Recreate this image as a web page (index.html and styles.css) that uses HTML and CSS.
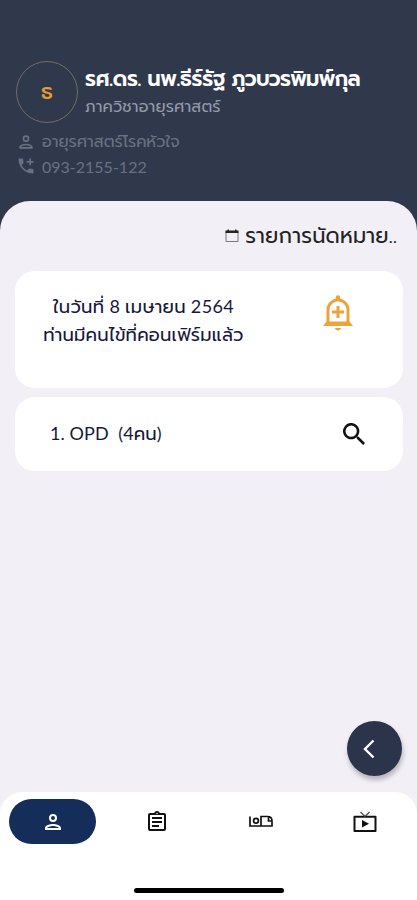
FILE: index.html
```html
<!DOCTYPE html>
<html lang="th">
<head>
    <meta charset="UTF-8">
    <meta name="viewport" content="width=device-width, initial-scale=1.0">
    <title>รายการนัดหมาย</title>
    <link rel="stylesheet" href="styles.css">
</head>
<body>
    <div class="app">
        <header class="header">
            <div class="profile">
                <div class="avatar">ธ</div>
                <div class="profile-text">
                    <h1><span class="name-title">รศ.ดร. นพ.ธีร์รัฐ</span> <span class="name-last">ภูวบวรพิมพ์กุล</span></h1>
                    <p class="department">ภาควิชาอายุรศาสตร์</p>
                </div>
            </div>
            <div class="info">
                <svg viewBox="0 0 24 24"><path d="M12 6a2 2 0 1 1 0 4 2 2 0 0 1 0-4m0 10c2.700 0 5.800 1.290 6 2H6c.230-.720 3.310-2 6-2m0-12a4 4 0 1 0 0 8 4 4 0 0 0 0-8m0 10c-2.670 0-8 1.340-8 4v2h16v-2c0-2.660-5.330-4-8-4"/></svg>
                <span class="specialty">อายุรศาสตร์โรคหัวใจ</span>
            </div>
            <div class="info">
                <svg viewBox="0 0 24 24"><path d="M20 15.500c-1.250 0-2.450-.2-3.570-.570-.350-.110-.740-.030-1.020.240l-2.200 2.200c-2.830-1.440-5.150-3.750-6.590-6.580l2.200-2.210c.280-.270.360-.660.250-1.010A11.400 11.400 0 0 1 8.500 4c0-.550-.450-1-1-1H4c-.550 0-1 .450-1 1 0 9.390 7.610 17 17 17 .550 0 1-.450 1-1v-3.500c0-.550-.450-1-1-1M21 6h-3V3h-2v3h-3v2h3v3h2V8h3z"/></svg>
                <span class="phone">093-2155-122</span>
            </div>
        </header>

        <main class="sheet">
            <div class="sheet-title">
                <svg viewBox="0 0 14 14"><path d="M1 2.500h12v10H1z" fill="none" stroke="#777" stroke-width="1"/><path d="M.5 1.500h13V4H.5zM2.500.5H4v2H2.500zM10 .5h1.500v2H10z"/></svg>
                <h2>รายการนัดหมาย..</h2>
            </div>

            <section class="card notice">
                <div class="notice-text">
                    <p class="notice-date">ในวันที่ 8 เมษายน 2564</p>
                    <p class="notice-message">ท่านมีคนไข้ที่คอนเฟิร์มแล้ว</p>
                </div>
                <svg class="bell" viewBox="0 0 30 36"><path d="M5 28V15a10 10 0 0 1 20 0v13" fill="none" stroke="#eda33b" stroke-width="3"/><path d="M12.700 5V2.500a2.300 2.300 0 0 1 4.600 0V5zM3.500 26.500h23L30 31H0zM11.500 33h7Q15 38 11.500 33M13.500 11h3v4.500H21v3h-4.500V23h-3v-4.500H9v-3h4.500z"/></svg>
            </section>

            <section class="card clinic">
                <p class="clinic-name">1. OPD&nbsp; (4คน)</p>
                <svg class="search" viewBox="3 3 17.500 17.500"><path d="M15.500 14h-.790l-.280-.270A6.500 6.500 0 1 0 13.730 14.430l.270.280v.790l5 4.990L20.490 19zm-6 0a4.500 4.500 0 1 1 0-9 4.500 4.500 0 0 1 0 9"/></svg>
            </section>

            <button class="back">
                <svg viewBox="0 0 12 20"><path d="M10.500 1.500L2 10l8.500 8.500" fill="none" stroke="#fff" stroke-width="2.400"/></svg>
            </button>
        </main>

        <footer class="footer">
            <nav class="tabs">
                <a class="tab active">
                    <svg viewBox="0 0 24 24"><path d="M12 6a2 2 0 1 1 0 4 2 2 0 0 1 0-4m0 10c2.700 0 5.800 1.290 6 2H6c.230-.720 3.310-2 6-2m0-12a4 4 0 1 0 0 8 4 4 0 0 0 0-8m0 10c-2.670 0-8 1.340-8 4v2h16v-2c0-2.660-5.330-4-8-4"/></svg>
                </a>
                <a class="tab">
                    <svg viewBox="0 0 24 24"><path d="M7 15h7v2H7zm0-4h10v2H7zm0-4h10v2H7zm12-4h-4.180C14.400 1.840 13.300 1 12 1s-2.400.840-2.820 2H5a2 2 0 0 0-2 2v14a2 2 0 0 0 2 2h14a2 2 0 0 0 2-2V5a2 2 0 0 0-2-2m-7-.250a.750.750 0 1 1 0 1.500.750.750 0 0 1 0-1.500M19 19H5V5h14z"/></svg>
                </a>
                <a class="tab">
                    <svg viewBox="0 0 24 24"><g fill="none" stroke="#111" stroke-width="1.700"><path d="M1 6.500v9.500h22v-5q0-4.500-4.500-4.500H12V16M19.500 7v4H23"/><circle cx="7" cy="10.800" r="2.400"/></g></svg>
                </a>
                <a class="tab">
                    <svg viewBox="0 0 24 24"><path d="M1.500 6.700h21v14.300h-21z" fill="none" stroke="#111" stroke-width="2" stroke-linejoin="round"/><path d="M7.500 2L12 6.500 16.500 2" fill="none" stroke="#444" stroke-width="1.200"/><path d="M9 10v7.500l7-3.750z"/></svg>
                </a>
            </nav>
            <div class="home-bar"></div>
        </footer>
    </div>
</body>
</html>
```
FILE: styles.css
```css
* {
    box-sizing: border-box;
}

body {
    margin: 0;
    font-family: Prompt, Kanit, "Noto Sans Thai", "Noto Sans", sans-serif;
    background-color: #f2eff7;
}

h1, h2, p {
    margin: 0;
    white-space: nowrap;
}

svg {
    display: block;
    flex: none;
    fill: currentColor;
}

.app {
    display: flex;
    flex-direction: column;
    height: 900px;
    overflow: hidden;
}

.header {
    flex: none;
    height: 241px;
    padding: 61px 16px 0;
    background-color: #30394c;
    color: #697181;
}

.profile {
    display: flex;
    gap: 7px;
    height: 69px;
}

.avatar {
    display: flex;
    align-items: center;
    justify-content: center;
    width: 62px;
    height: 62px;
    border: 1px solid #746b68;
    border-radius: 50%;
    color: #e69b32;
    font-size: 21px;
    font-weight: 500;
}

.profile-text h1 {
    height: 35px;
    line-height: 37px;
    color: #fff;
    font-size: 21px;
    font-weight: 600;
    letter-spacing: -0.3px;
    word-spacing: -1px;
}

.name-last {
    letter-spacing: -0.75px;
}

.department {
    line-height: 22px;
    color: #949aa7;
    font-size: 16px;
    letter-spacing: 0.15px;
}

.info {
    display: flex;
    align-items: center;
    gap: 6px;
    height: 24px;
    font-size: 16px;
}

.info svg {
    width: 20px;
    height: 20px;
}

.phone {
    font-family: Lato, sans-serif;
    font-size: 16px;
}

.sheet {
    display: flex;
    flex: none;
    flex-direction: column;
    height: 591px;
    margin-top: -40px;
    padding: 15px 14px 16px;
    background-color: #f2eff7;
    border-radius: 30px 30px 0 0;
}

.sheet-title {
    display: flex;
    align-items: center;
    justify-content: flex-end;
    gap: 6px;
    height: 40px;
    margin-bottom: 15px;
    padding-right: 6px;
    color: #222;
}

.sheet-title svg {
    width: 14px;
    height: 14px;
}

.sheet-title h2 {
    font-size: 21px;
    font-weight: 400;
    letter-spacing: 0.2px;
}

.card {
    display: flex;
    justify-content: space-between;
    width: 388px;
    margin-left: 1px;
    background-color: #fff;
    border-radius: 20px;
    color: #17183b;
    font-family: Lato, Prompt, Kanit, "Noto Sans Thai", "Noto Sans", sans-serif;
    font-size: 18px;
}

.notice {
    height: 117px;
    margin-bottom: 9px;
    padding: 21px 50px 0 28px;
}

.notice-text {
    display: flex;
    flex-direction: column;
    align-items: center;
    width: 201px;
    line-height: 28px;
}

.notice-date {
    letter-spacing: 0.35px;
}

.notice-message {
    letter-spacing: 0.2px;
}

.bell {
    width: 30px;
    height: 36px;
    margin-top: 3px;
    color: #eda33b;
}

.clinic {
    align-items: center;
    height: 74px;
    padding: 0 38px 0 35px;
}

.clinic-name {
    letter-spacing: 0.1px;
}

.search {
    width: 22px;
    height: 22px;
    color: #111;
}

.back {
    display: flex;
    align-items: center;
    justify-content: center;
    width: 55px;
    height: 55px;
    margin: auto 1px 0 auto;
    padding: 0 12px 0 0;
    background-color: #2b344b;
    border: none;
    border-radius: 50%;
    box-shadow: 1px 4px 5px rgba(0, 0, 0, 0.25);
}

.back svg {
    width: 12px;
    height: 20px;
}

.footer {
    flex: none;
    height: 108px;
    background-color: #fff;
    border-radius: 22px 22px 0 0;
}

.tabs {
    display: flex;
    justify-content: space-between;
    height: 96px;
    padding: 7px 9px 0;
}

.tab {
    display: flex;
    align-items: center;
    justify-content: center;
    width: 87px;
    height: 45px;
    color: #111;
}

.tab svg {
    width: 24px;
    height: 24px;
}

.active {
    background-color: #142d59;
    border-radius: 23px;
    color: #fff;
}

.home-bar {
    width: 150px;
    height: 5px;
    margin: 0 auto;
    background-color: #000;
    border-radius: 3px;
}
```
